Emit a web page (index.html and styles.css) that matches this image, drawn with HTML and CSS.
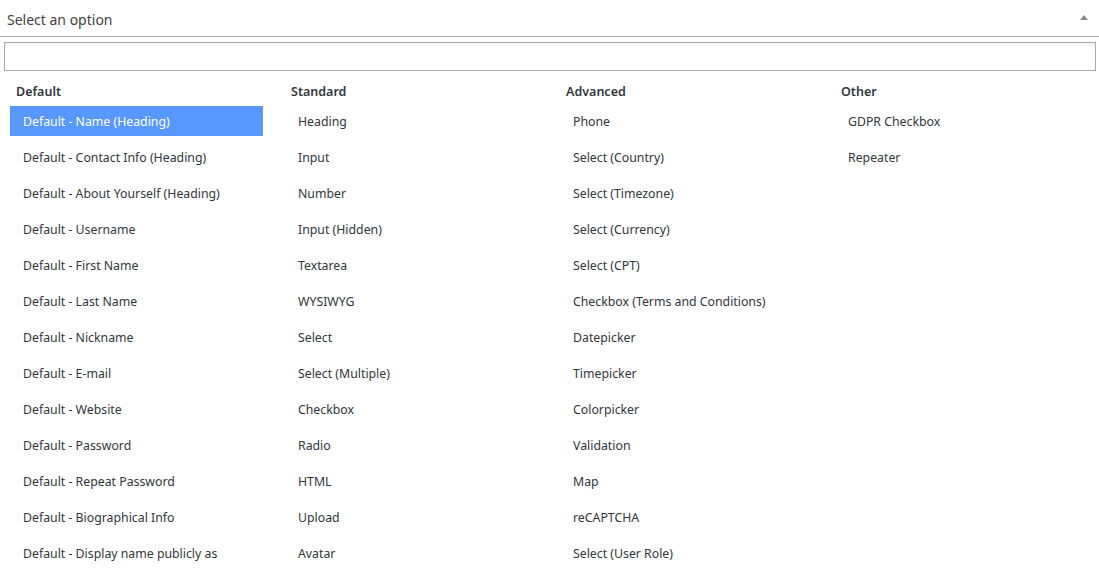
FILE: index.html
```html
<!DOCTYPE html>
<html>
<head>
<meta charset="utf-8">
<link rel="stylesheet" href="styles.css">
</head>
<body>
<div class="select">
  <span class="placeholder">Select an option</span>
  <span class="arrow"></span>
</div>
<div class="dropdown">
  <div class="search"></div>
  <div class="columns">
    <div class="group">
      <div class="group-title">Default</div>
      <div class="item active">Default - Name (Heading)</div>
      <div class="item">Default - Contact Info (Heading)</div>
      <div class="item">Default - About Yourself (Heading)</div>
      <div class="item">Default - Username</div>
      <div class="item">Default - First Name</div>
      <div class="item">Default - Last Name</div>
      <div class="item">Default - Nickname</div>
      <div class="item">Default - E-mail</div>
      <div class="item">Default - Website</div>
      <div class="item">Default - Password</div>
      <div class="item">Default - Repeat Password</div>
      <div class="item">Default - Biographical Info</div>
      <div class="item">Default - Display name publicly as</div>
    </div>
    <div class="group">
      <div class="group-title">Standard</div>
      <div class="item">Heading</div>
      <div class="item">Input</div>
      <div class="item">Number</div>
      <div class="item">Input (Hidden)</div>
      <div class="item">Textarea</div>
      <div class="item">WYSIWYG</div>
      <div class="item">Select</div>
      <div class="item">Select (Multiple)</div>
      <div class="item">Checkbox</div>
      <div class="item">Radio</div>
      <div class="item">HTML</div>
      <div class="item">Upload</div>
      <div class="item">Avatar</div>
    </div>
    <div class="group">
      <div class="group-title">Advanced</div>
      <div class="item">Phone</div>
      <div class="item">Select (Country)</div>
      <div class="item">Select (Timezone)</div>
      <div class="item">Select (Currency)</div>
      <div class="item">Select (CPT)</div>
      <div class="item">Checkbox (Terms and Conditions)</div>
      <div class="item">Datepicker</div>
      <div class="item">Timepicker</div>
      <div class="item">Colorpicker</div>
      <div class="item">Validation</div>
      <div class="item">Map</div>
      <div class="item">reCAPTCHA</div>
      <div class="item">Select (User Role)</div>
    </div>
    <div class="group">
      <div class="group-title">Other</div>
      <div class="item">GDPR Checkbox</div>
      <div class="item">Repeater</div>
    </div>
  </div>
</div>
</body>
</html>
```
FILE: styles.css
```css
html, body {
  margin: 0;
  padding: 0;
  background: #fff;
  font-family: "Noto Sans", "Open Sans", sans-serif;
  color: #32373c;
  overflow: hidden;
}
.select {
  height: 34px;
  border-bottom: 1px solid #aaa;
  display: flex;
  align-items: center;
  justify-content: space-between;
  padding: 2px 8px 0 7px;
}
.placeholder {
  font-size: 14px;
  color: #444;
}
.arrow {
  width: 0;
  height: 0;
  border-left: 4px solid transparent;
  border-right: 4px solid transparent;
  border-bottom: 5px solid #888;
  margin-right: 3px;
  margin-top: -4px;
}
.dropdown {
  padding: 5px 3px 0 4px;
}
.search {
  height: 27px;
  border: 1px solid #aaa;
  background: linear-gradient(#f4f4f4, #fff 6px);
}
.columns {
  display: grid;
  grid-template-columns: repeat(4, 275px);
  padding: 10px 0 0 6px;
}
.group-title {
  font-weight: 600;
  font-size: 12.5px;
  height: 22px;
  line-height: 22px;
  padding-left: 6px;
  margin-bottom: 3px;
  color: #32373c;
}
.item {
  width: 253px;
  height: 30px;
  line-height: 28px;
  padding: 2px 0 0 13px;
  box-sizing: border-box;
  font-size: 12.3px;
  margin-bottom: 6px;
  white-space: nowrap;
}
.item.active {
  background: #5897fb;
  color: #fff;
}
```
